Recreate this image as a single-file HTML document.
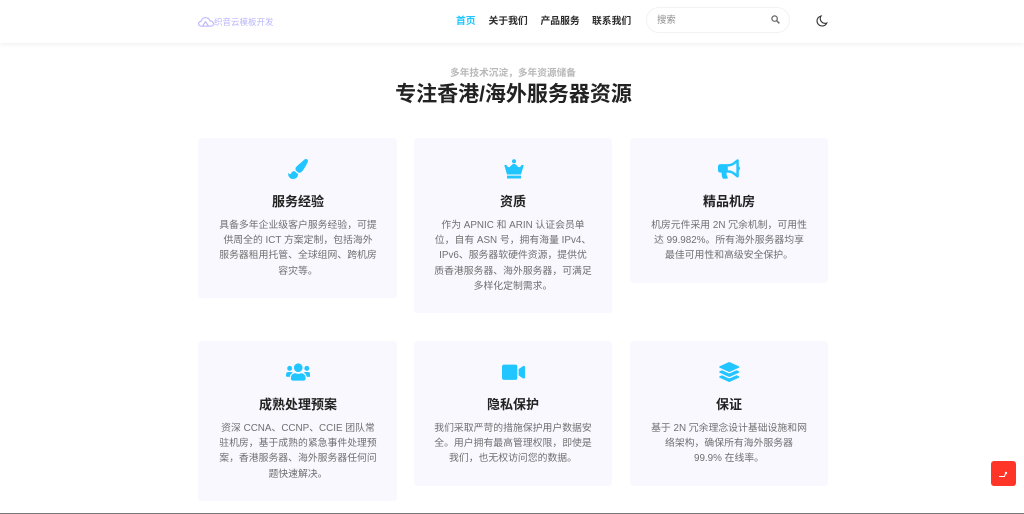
<!DOCTYPE html>
<html lang="zh-CN">
<head>
<meta charset="utf-8">
<title>专注香港/海外服务器资源</title>
<style>
*{box-sizing:border-box;margin:0;padding:0}
html,body{width:1024px;height:514px;overflow:hidden;background:#fff}
body{font-family:"Liberation Sans","Noto Sans CJK SC",sans-serif;position:relative;color:#222}
.a{position:absolute;white-space:nowrap}
header{position:absolute;left:0;top:0;width:1024px;height:43px;background:#fff;box-shadow:0 1px 5px rgba(0,0,0,.07)}
.nav{font-size:9.8px;font-weight:700;line-height:14px;top:15px;color:#2b2b2b}
.card{position:absolute;width:198px;background:#f9f8ff;border-radius:3px}
.t{position:absolute;left:0;width:198px;text-align:center;font-size:13px;font-weight:700;line-height:18px;color:#222}
.p{position:absolute;left:0;width:198px;text-align:center;font-size:9.85px;line-height:15.4px;color:#707070;white-space:nowrap}
.c1 .t,.c1 .p{left:1px}
svg{position:absolute;fill:#21c5ff}
.bottom{position:absolute;left:0;top:513px;width:1024px;height:1px;background:#777}
</style>
</head>
<body>
<header>
  <svg style="left:198px;top:17px;fill:none;stroke:#bdb8fb;stroke-width:1.2" width="16" height="10" viewBox="0 0 16 10"><path d="M3.500 9.200C1.600 9.200.6 8 .6 6.800c0-1.400 1.100-2.400 2.400-2.400C3.500 2.200 5.400.7 7.600.7c2.200 0 3.800 1.300 4.400 3.200 1.900-.1 3.400 1.200 3.400 2.800 0 1.400-1 2.500-2.600 2.500z"/><path d="M4.500 9.200l3-4.600 3 4.600"/></svg>
  <div class="a" style="left:214px;top:15.500px;font-size:8.500px;line-height:13px;color:#b9b6fa">织音云模板开发</div>
  <div class="a nav" style="left:456px;color:#21c5ff">首页</div>
  <div class="a nav" style="left:488.500px">关于我们</div>
  <div class="a nav" style="left:540.500px">产品服务</div>
  <div class="a nav" style="left:592px">联系我们</div>
  <div class="a" style="left:646px;top:7px;width:144px;height:26px;border:1px solid #f2f2f2;border-radius:13px;background:#fff"></div>
  <div class="a" style="left:657px;top:13px;font-size:9.400px;line-height:14px;color:#8e8e8e">搜索</div>
  <svg style="left:771px;top:15px;fill:none;stroke:#666;stroke-width:1.200" width="9" height="9" viewBox="0 0 9 9"><circle cx="3.600" cy="3.600" r="2.700"/><path d="M5.600 5.600L8.400 8.400" stroke-width="1.500"/></svg>
  <svg style="left:816px;top:15px;fill:none;stroke:#333;stroke-width:1.100" width="12" height="12" viewBox="0 0 12 12"><path d="M5 1C2.700 1.500 1 3.500 1 5.900 1 8.700 3.300 11 6.100 11c2.100 0 3.900-1.200 4.700-3-.6.2-1.200.3-1.800.3C6.400 8.300 4.200 6.100 4.200 3.500 4.200 2.600 4.500 1.700 5 1z"/></svg>
</header>

<div class="a" style="left:0;width:1024px;top:66px;text-align:center;font-size:9.700px;line-height:15px;font-weight:700;color:#b8b8b8;text-indent:2px">多年技术沉淀，多年资源储备</div>
<div class="a" style="left:0;width:1024px;top:79px;text-align:center;font-size:21px;line-height:31px;font-weight:700;color:#222;text-indent:3px">专注香港/海外服务器资源</div>

<div class="card c1" style="left:198px;top:138px;height:160px;width:198.500px">
  <svg style="left:89.500px;top:21px" width="20" height="20" viewBox="0 0 512 512"><path d="M167.020 309.340c-40.120 2.580-76.530 17.860-97.190 72.300-2.350 6.210-8 9.980-14.590 9.980-11.110 0-45.460-27.670-55.250-34.350C0 439.620 37.930 512 128 512c75.860 0 128-43.770 128-120.190 0-3.110-.65-6.080-.97-9.130l-88.010-73.340zM457.890 0c-15.160 0-29.370 6.710-40.210 16.450C213.270 199.050 192 203.340 192 257.090c0 13.700 3.250 26.760 8.730 38.700l63.820 53.180c7.210 1.800 14.640 3.030 22.390 3.030 62.110 0 98.110-45.470 211.160-256.460 7.380-14.350 13.900-29.850 13.900-45.990C512 20.640 486 0 457.890 0z"/></svg>
  <div class="t" style="top:54.500px">服务经验</div>
  <div class="p" style="top:79.500px">具备多年企业级客户服务经验，可提<br>供周全的 ICT 方案定制，包括海外<br>服务器租用托管、全球组网、跨机房<br>容灾等。</div>
</div>

<div class="card" style="left:414px;top:138px;height:175px">
  <svg style="left:89.500px;top:21px" width="20" height="20" viewBox="0 0 20 20"><circle cx="10" cy="2.200" r="2"/><path d="M.3 6.200C1.500 5.500 2.800 6 3.300 7.200c.5 1 1.800 1.300 2.700.5C6.900 7 7.800 5.800 8.500 5.300c.9-.6 2.100-.6 3 0 .7.500 1.600 1.700 2.500 2.400.9.800 2.200.5 2.700-.5.500-1.200 1.800-1.700 3-1L17 15.500H3z"/><rect x="3" y="16.600" width="14" height="2.900" rx=".3"/></svg>
  <div class="t" style="top:54.500px">资质</div>
  <div class="p" style="top:79.500px">作为 APNIC 和 ARIN 认证会员单<br>位，自有 ASN 号，拥有海量 IPv4、<br>IPv6、服务器软硬件资源，提供优<br>质香港服务器、海外服务器，可满足<br>多样化定制需求。</div>
</div>

<div class="card" style="left:630px;top:138px;height:145px">
  <svg style="left:88px;top:21px" width="22" height="20" viewBox="0 0 576 512"><path d="M576 240c0-23.630-12.950-44.040-32-55.120V32.010C544 23.260 537.020 0 512 0c-7.120 0-14.190 2.380-19.980 7.020l-85.030 68.030C364.280 109.190 310.660 128 256 128H64c-35.350 0-64 28.650-64 64v96c0 35.350 28.650 64 64 64h33.700c-1.390 10.480-2.180 21.140-2.180 32 0 39.770 9.260 77.350 25.560 110.940 5.190 10.690 16.520 17.060 28.400 17.060h74.280c26.050 0 41.690-29.840 25.900-50.560-16.400-21.520-26.150-48.360-26.150-77.440 0-11.110 1.620-21.790 4.410-32H256c54.660 0 108.280 18.810 150.980 52.950l85.030 68.030a32.023 32.023 0 0 0 19.980 7.020c24.920 0 32-22.780 32-32V295.130C563.050 284.040 576 263.630 576 240zm-96 141.420l-33.050-26.440C392.950 311.780 325.120 288 256 288v-96c69.120 0 136.950-23.780 190.950-66.980L480 98.580v282.840z"/></svg>
  <div class="t" style="top:54.500px">精品机房</div>
  <div class="p" style="top:79.500px">机房元件采用 2N 冗余机制，可用性<br>达 99.982%。所有海外服务器均享<br>最佳可用性和高级安全保护。</div>
</div>

<div class="card c1" style="left:198px;top:341px;height:160px;width:198.500px">
  <svg style="left:87.500px;top:20.500px" width="24.500" height="20" viewBox="0 0 640 512"><path d="M96 224c35.300 0 64-28.700 64-64s-28.700-64-64-64-64 28.700-64 64 28.700 64 64 64zm448 0c35.300 0 64-28.700 64-64s-28.700-64-64-64-64 28.700-64 64 28.700 64 64 64zm32 32h-64c-17.600 0-33.500 7.100-45.100 18.600 40.300 22.100 68.900 62 75.100 109.400h66c17.700 0 32-14.300 32-32v-32c0-35.300-28.700-64-64-64zm-256 0c61.900 0 112-50.100 112-112S381.900 32 320 32 208 82.100 208 144s50.100 112 112 112zm76.800 32h-8.300c-20.800 10-43.900 16-68.500 16s-47.600-6-68.500-16h-8.300C179.600 288 128 339.600 128 403.200V432c0 26.500 21.500 48 48 48h288c26.500 0 48-21.500 48-48v-28.800c0-63.600-51.600-115.200-115.200-115.200zm-223.700-13.400C161.500 263.100 145.600 256 128 256H64c-35.300 0-64 28.700-64 64v32c0 17.700 14.300 32 32 32h65.900c6.300-47.400 34.900-87.300 75.200-109.400z"/></svg>
  <div class="t" style="top:54.500px">成熟处理预案</div>
  <div class="p" style="top:79.500px">资深 CCNA、CCNP、CCIE 团队常<br>驻机房，基于成熟的紧急事件处理预<br>案，香港服务器、海外服务器任何问<br>题快速解决。</div>
</div>

<div class="card" style="left:414px;top:341px;height:145px">
  <svg style="left:88px;top:20.500px" width="23" height="20.500" viewBox="0 0 576 512"><path d="M336.200 64H47.800C21.400 64 0 85.400 0 111.800v288.400C0 426.600 21.400 448 47.800 448h288.400c26.400 0 47.800-21.400 47.800-47.800V111.800c0-26.400-21.400-47.800-47.800-47.800zm189.400 37.700L416 177.300v157.400l109.600 75.500c21.200 14.600 50.400-.3 50.400-25.800V127.500c0-25.400-29.100-40.400-50.400-25.800z"/></svg>
  <div class="t" style="top:54.500px">隐私保护</div>
  <div class="p" style="top:79.500px">我们采取严苛的措施保护用户数据安<br>全。用户拥有最高管理权限，即使是<br>我们，也无权访问您的数据。</div>
</div>

<div class="card" style="left:630px;top:341px;height:145px">
  <svg style="left:89px;top:20.500px" width="20.500" height="20" viewBox="0 0 512 512"><path d="M12.410 148.020l232.940 105.670c6.800 3.090 14.490 3.090 21.290 0l232.940-105.670c16.550-7.510 16.550-32.520 0-40.030L266.650 2.310a25.607 25.607 0 0 0-21.290 0L12.410 107.980c-16.550 7.510-16.550 32.530 0 40.040zm487.180 88.280l-58.090-26.330-161.640 73.270c-7.560 3.430-15.590 5.170-23.860 5.170s-16.290-1.740-23.860-5.170L70.510 209.970l-58.100 26.330c-16.550 7.500-16.550 32.500 0 40l232.940 105.590c6.800 3.080 14.490 3.080 21.290 0L499.590 276.300c16.550-7.500 16.550-32.500 0-40zm0 127.800l-57.870-26.230-161.860 73.370c-7.560 3.430-15.590 5.170-23.860 5.170s-16.290-1.740-23.860-5.170L70.290 337.870 12.410 364.100c-16.550 7.500-16.550 32.500 0 40l232.940 105.590c6.800 3.080 14.490 3.080 21.290 0L499.590 404.100c16.550-7.500 16.550-32.500 0-40z"/></svg>
  <div class="t" style="top:54.500px">保证</div>
  <div class="p" style="top:79.500px">基于 2N 冗余理念设计基础设施和网<br>络架构，确保所有海外服务器<br>99.9% 在线率。</div>
</div>

<div class="a" style="left:991px;top:461px;width:25px;height:25px;background:#ff3527;border-radius:3px"></div>
<svg style="left:999px;top:470px;fill:none;stroke:#fff;stroke-width:1" width="9" height="8" viewBox="0 0 9 8"><path d="M0 6.500h5.500L6.500 3.500"/><circle cx="7" cy="3" r="1.200" fill="#fff" stroke="none"/></svg>
<div class="bottom"></div>
</body>
</html>
